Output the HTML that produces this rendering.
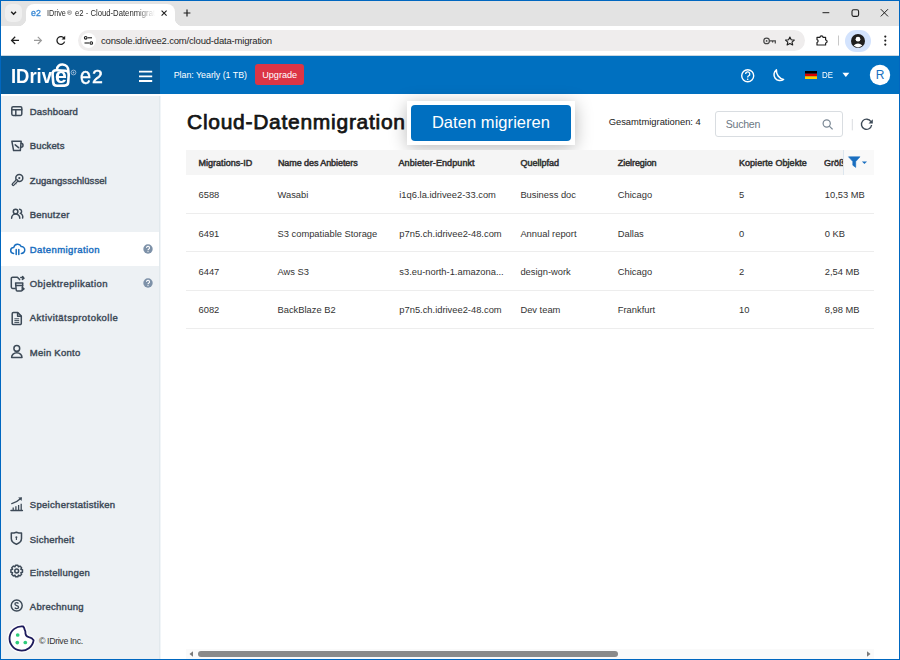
<!DOCTYPE html>
<html><head><meta charset="utf-8">
<style>
*{margin:0;padding:0;box-sizing:border-box}
html,body{width:900px;height:660px;overflow:hidden;background:#fff;font-family:"Liberation Sans",sans-serif}
.abs{position:absolute}
.t{position:absolute;white-space:nowrap;line-height:1}
svg{overflow:visible}
</style></head><body>
<div class="abs" style="left:0;top:0;width:900px;height:660px;background:#0067c0"></div>
<div class="abs" style="left:1px;top:1px;width:898px;height:658px;background:#fff"></div>
<div class="abs" style="left:1px;top:1px;width:898px;height:25px;background:#e3e3e3"></div>
<div class="abs" style="left:26px;top:4px;width:149px;height:23px;background:#fff;border-radius:8px 8px 0 0"></div>
<div class="abs" style="left:18px;top:18px;width:8px;height:8px;background:radial-gradient(circle at 0 0,#e3e3e3 8px,#fff 8.5px)"></div>
<div class="abs" style="left:175px;top:18px;width:8px;height:8px;background:radial-gradient(circle at 8px 0,#e3e3e3 8px,#fff 8.5px)"></div>
<div class="abs" style="left:5px;top:4px;width:17px;height:18px;background:#efefef;border-radius:6px"></div>
<svg class="abs" style="left:0;top:0" width="900" height="56" viewBox="0 0 900 56"><path d="M11.2 11.8 L13.6 14.2 L16 11.8" fill="none" stroke="#1f1f1f" stroke-width="1.5"/></svg>
<div class="t" style="left:31.20px;top:8.07px;font-size:9.60px;transform:scaleX(0.9177);transform-origin:0 0;color:#3a8ad6;-webkit-text-stroke:0.35px #3a8ad6;">e2</div>
<div class="abs" style="left:47px;top:6px;width:108px;height:16px;overflow:hidden;-webkit-mask-image:linear-gradient(90deg,#000 82%,transparent)"><div class="t" style="left:0.00px;top:3.32px;font-size:8.60px;transform:scaleX(0.8416);transform-origin:0 0;color:#2a2a2a;">IDrive</div><div class="t" style="left:20.30px;top:4.05px;font-size:6.20px;transform:scaleX(1.0945);transform-origin:0 0;color:#2a2a2a;">®</div><div class="t" style="left:28.10px;top:3.32px;font-size:8.60px;transform:scaleX(0.8966);transform-origin:0 0;color:#2a2a2a;">e2 - Cloud-Datenmigration</div></div>
<svg class="abs" style="left:0;top:0" width="900" height="56" viewBox="0 0 900 56"><path d="M161.6 10.6 L166.6 15.6 M166.6 10.6 L161.6 15.6" stroke="#1f1f1f" stroke-width="1.1"/><path d="M187 9.6 V16.4 M183.6 13 H190.4" stroke="#1f1f1f" stroke-width="1.2"/><path d="M822.5 12.7 H829.3" stroke="#1f1f1f" stroke-width="1"/><rect x="852" y="9.8" width="6.6" height="6.6" rx="1.6" fill="none" stroke="#1f1f1f" stroke-width="1.1"/><path d="M880.8 9.2 L888 16.4 M888 9.2 L880.8 16.4" stroke="#1f1f1f" stroke-width="1"/></svg>
<div class="abs" style="left:1px;top:55px;width:898px;height:1px;background:#c9d7e1"></div>
<div class="abs" style="left:77.5px;top:29.6px;width:727.5px;height:21.2px;background:#efeded;border-radius:11px"></div>
<div class="abs" style="left:81px;top:33px;width:15px;height:15px;background:#fff;border-radius:50%"></div>
<div class="t" style="left:101.00px;top:35.96px;font-size:9.50px;letter-spacing:-0.183px;color:#262626;">console.idrivee2.com/cloud-data-migration</div>
<svg class="abs" style="left:0;top:0" width="900" height="56" viewBox="0 0 900 56"><path d="M19 40.4 H11.6 M15.2 36.8 L11.6 40.4 L15.2 44" fill="none" stroke="#1f1f1f" stroke-width="1.3"/><path d="M34 40.4 H41.4 M37.8 36.8 L41.4 40.4 L37.8 44" fill="none" stroke="#9a9a9a" stroke-width="1.2"/><path d="M64.3 38.6 A3.9 3.9 0 1 0 64.6 41.6" fill="none" stroke="#1f1f1f" stroke-width="1.3"/><path d="M65.2 35.8 V39.4 H61.6 Z" fill="#1f1f1f"/><circle cx="85.7" cy="37.8" r="1.3" fill="none" stroke="#1f1f1f" stroke-width="1.1"/><path d="M87.6 37.8 H92" stroke="#1f1f1f" stroke-width="1.1"/><circle cx="91.3" cy="43" r="1.3" fill="none" stroke="#1f1f1f" stroke-width="1.1"/><path d="M84.5 43 H89.3" stroke="#1f1f1f" stroke-width="1.1"/><circle cx="766.6" cy="40.9" r="2.8" fill="none" stroke="#474747" stroke-width="1.2"/><circle cx="766.6" cy="40.9" r="0.9" fill="#474747"/><path d="M769.4 40.9 H775.3 V43.6 M772.6 40.9 V42.6" fill="none" stroke="#474747" stroke-width="1.2"/><path d="M789.9 37 L791.2 39.8 L794.3 40.1 L792 42.1 L792.7 45 L789.9 43.5 L787.1 45 L787.8 42.1 L785.5 40.1 L788.6 39.8 Z" fill="none" stroke="#1f1f1f" stroke-width="1.1" stroke-linejoin="round"/><path d="M817 37.3 H820 A1.5 1.5 0 0 1 823 37.3 H825.6 V40 A1.5 1.5 0 0 1 825.6 43 V45 H817 V42.5 A1.5 1.5 0 0 0 817 39.6 Z" fill="none" stroke="#1f1f1f" stroke-width="1.2" stroke-linejoin="round"/><path d="M838.5 35.5 V45.5" stroke="#c8c8c8" stroke-width="1"/><circle cx="885.3" cy="36.6" r="1.1" fill="#1f1f1f"/><circle cx="885.3" cy="40.6" r="1.1" fill="#1f1f1f"/><circle cx="885.3" cy="44.6" r="1.1" fill="#1f1f1f"/></svg>
<div class="abs" style="left:845px;top:29.5px;width:26px;height:22px;background:#d3e3fd;border-radius:11px"></div>
<svg class="abs" style="left:850px;top:33px" width="16" height="16" viewBox="0 0 16 16"><circle cx="8" cy="8" r="7" fill="#1f1f1f"/><circle cx="8" cy="6.2" r="2.4" fill="#fff"/><path d="M3.6 12.6 Q8 8.6 12.4 12.6 A7 7 0 0 1 3.6 12.6 Z" fill="#fff"/></svg>
<div class="abs" style="left:1px;top:56px;width:898px;height:38px;background:#0070c0"></div>
<div class="abs" style="left:1px;top:56px;width:159px;height:38px;background:#065a98"></div>
<div class="t" style="left:11.00px;top:66.84px;font-size:19.80px;font-weight:bold;transform:scaleX(0.9314);transform-origin:0 0;color:#fff;">IDriv</div>
<svg class="abs" style="left:48px;top:60px" width="60" height="30" viewBox="48 60 60 30"><path d="M57 69.6 C56.6 62.6 68.8 62.2 68.5 71.6" fill="none" stroke="#fff" stroke-width="2.6"/><path d="M56.6 70.2 L65.6 70.8 Q69 71.1 68.7 75 L68.2 82.4 Q67.9 85.6 64.6 85.6 L57 85.8 Q53.5 85.8 53.2 82.4 L52.6 74.6 Q52.4 70 56.6 70.2 Z" fill="#065a98" stroke="#fff" stroke-width="2.6" stroke-linejoin="round"/><circle cx="73.5" cy="72.5" r="2.4" fill="none" stroke="#9fbbd8" stroke-width="0.9"/><circle cx="73.5" cy="72.5" r="0.9" fill="#9fbbd8"/></svg>
<div class="t" style="left:54.70px;top:65.18px;font-size:22.00px;font-weight:bold;transform:scaleX(0.9644);transform-origin:0 0;color:#fff;">e</div>
<div class="t" style="left:79.90px;top:63.88px;font-size:24.00px;transform:scaleX(0.8241);transform-origin:0 0;color:#fff;-webkit-text-stroke:0.5px #fff;">e</div>
<div class="t" style="left:92.40px;top:69.10px;font-size:17.60px;transform:scaleX(1.1033);transform-origin:0 0;color:#fff;-webkit-text-stroke:0.5px #fff;">2</div>
<svg class="abs" style="left:136.5px;top:69px" width="18" height="16" viewBox="0 0 18 16"><path d="M2 2.6 H15.2 M2 7.3 H15.2 M2 12 H15.2" stroke="#fff" stroke-width="1.8"/></svg>
<div class="t" style="left:173.70px;top:70.87px;font-size:8.90px;letter-spacing:-0.030px;-webkit-text-stroke:0.00px #fff;color:#fff;">Plan: Yearly (1 TB)</div>
<div class="abs" style="left:255px;top:64.2px;width:49.2px;height:20.8px;background:#dc3545;border-radius:3px"></div>
<div class="t" style="left:262.20px;top:70.90px;font-size:9.10px;letter-spacing:0.015px;-webkit-text-stroke:0.00px #fff;color:#fff;">Upgrade</div>
<svg class="abs" style="left:730px;top:60px" width="170" height="32" viewBox="730 60 170 32"><circle cx="747.7" cy="75.7" r="6" fill="none" stroke="#fff" stroke-width="1.4"/><path d="M745.6 74 A2.1 2.1 0 1 1 748.4 76 Q747.7 76.4 747.7 77.4" fill="none" stroke="#fff" stroke-width="1.3"/><circle cx="747.7" cy="79.3" r="0.8" fill="#fff"/><path d="M776.4 69.8 A6 6 0 1 0 783.6 79.4 A9 9 0 0 1 776.4 69.8 Z" fill="none" stroke="#fff" stroke-width="1.5" stroke-linejoin="round"/><rect x="805" y="71" width="12" height="2.7" fill="#000"/><rect x="805" y="73.7" width="12" height="2.6" fill="#dd0000"/><rect x="805" y="76.3" width="12" height="2.7" fill="#ffce00"/><path d="M842.4 72.8 H849.3 L845.85 76.9 Z" fill="#fff"/><circle cx="880" cy="75" r="10.2" fill="#fff"/></svg>
<div class="t" style="left:821.90px;top:70.20px;font-size:9.80px;transform:scaleX(0.8080);transform-origin:0 0;color:#fff;">DE</div>
<div class="t" style="left:875.80px;top:69.14px;font-size:12.00px;color:#1a6fc0;">R</div>
<div class="abs" style="left:1px;top:94px;width:159px;height:2px;background:#fff"></div>
<div class="abs" style="left:1px;top:96px;width:158px;height:563px;background:#edf1f4"></div>
<div class="abs" style="left:160px;top:96px;width:1px;height:563px;background:#f1f5f8"></div>
<div class="abs" style="left:159px;top:96px;width:1px;height:563px;background:#e2e9ed"></div>
<div class="abs" style="left:1px;top:232px;width:158px;height:34px;background:#fff"></div>
<div class="t" style="left:29.80px;top:106.76px;font-size:9.50px;letter-spacing:0.188px;-webkit-text-stroke:0.42px #3d4a57;color:#3d4a57;">Dashboard</div>
<div class="t" style="left:29.80px;top:141.16px;font-size:9.50px;letter-spacing:0.131px;-webkit-text-stroke:0.42px #3d4a57;color:#3d4a57;">Buckets</div>
<div class="t" style="left:29.80px;top:175.56px;font-size:9.50px;letter-spacing:0.056px;-webkit-text-stroke:0.42px #3d4a57;color:#3d4a57;">Zugangsschlüssel</div>
<div class="t" style="left:29.80px;top:209.96px;font-size:9.50px;letter-spacing:0.222px;-webkit-text-stroke:0.42px #3d4a57;color:#3d4a57;">Benutzer</div>
<div class="t" style="left:29.80px;top:244.56px;font-size:9.50px;letter-spacing:0.404px;-webkit-text-stroke:0.42px #1a6fc0;color:#1a6fc0;">Datenmigration</div>
<div class="t" style="left:29.80px;top:278.96px;font-size:9.50px;letter-spacing:0.432px;-webkit-text-stroke:0.42px #3d4a57;color:#3d4a57;">Objektreplikation</div>
<div class="t" style="left:29.80px;top:313.36px;font-size:9.50px;letter-spacing:0.462px;-webkit-text-stroke:0.42px #3d4a57;color:#3d4a57;">Aktivitätsprotokolle</div>
<div class="t" style="left:29.80px;top:347.96px;font-size:9.50px;letter-spacing:0.269px;-webkit-text-stroke:0.42px #3d4a57;color:#3d4a57;">Mein Konto</div>
<div class="t" style="left:29.80px;top:500.46px;font-size:9.50px;letter-spacing:0.308px;-webkit-text-stroke:0.42px #3d4a57;color:#3d4a57;">Speicherstatistiken</div>
<div class="t" style="left:29.80px;top:534.56px;font-size:9.50px;letter-spacing:0.226px;-webkit-text-stroke:0.42px #3d4a57;color:#3d4a57;">Sicherheit</div>
<div class="t" style="left:29.80px;top:568.26px;font-size:9.50px;letter-spacing:0.253px;-webkit-text-stroke:0.42px #3d4a57;color:#3d4a57;">Einstellungen</div>
<div class="t" style="left:29.80px;top:602.26px;font-size:9.50px;letter-spacing:0.283px;-webkit-text-stroke:0.42px #3d4a57;color:#3d4a57;">Abrechnung</div>
<svg class="abs" style="left:142px;top:243.0px" width="12" height="12" viewBox="0 0 12 12"><circle cx="6" cy="6" r="4.7" fill="#7d91a8"/><path d="M4.5 4.9 A1.5 1.5 0 1 1 6.6 6.2 Q6 6.5 6 7.2" fill="none" stroke="#fff" stroke-width="1.1"/><circle cx="6" cy="8.6" r="0.6" fill="#fff"/></svg>
<svg class="abs" style="left:142px;top:277.4px" width="12" height="12" viewBox="0 0 12 12"><circle cx="6" cy="6" r="4.7" fill="#7d91a8"/><path d="M4.5 4.9 A1.5 1.5 0 1 1 6.6 6.2 Q6 6.5 6 7.2" fill="none" stroke="#fff" stroke-width="1.1"/><circle cx="6" cy="8.6" r="0.6" fill="#fff"/></svg>
<svg class="abs" style="left:0;top:90px" width="40" height="570" viewBox="0 90 40 570"><rect x="11.8" y="106.8" width="10" height="8.6" rx="1.3" fill="none" stroke="#3d4a57" stroke-width="1.5" stroke-linejoin="round" stroke-linecap="round"/><path d="M11.8 109.8 H21.8 M15.8 109.8 V115.4" fill="none" stroke="#3d4a57" stroke-width="1.5" stroke-linejoin="round" stroke-linecap="round"/><path d="M11.9 141.3 H21.2 L20.3 150.6 H13.6 Z" fill="none" stroke="#3d4a57" stroke-width="1.5" stroke-linejoin="round" stroke-linecap="round"/><path d="M21 143.2 A2 2 0 0 1 21 147.2" fill="none" stroke="#3d4a57" stroke-width="1.5" stroke-linejoin="round" stroke-linecap="round"/><path d="M15.2 144.8 L18.6 147.6" fill="none" stroke="#3d4a57" stroke-width="1.5" stroke-linejoin="round" stroke-linecap="round"/><circle cx="19.3" cy="178.1" r="3.5" fill="none" stroke="#3d4a57" stroke-width="1.5" stroke-linejoin="round" stroke-linecap="round"/><circle cx="19.3" cy="178.1" r="1.1" fill="#3d4a57"/><path d="M16.9 180.7 L13.2 184.4" fill="none" stroke="#3d4a57" stroke-width="3.3" stroke-linecap="round"/><path d="M16.6 181 L13.3 184.3" fill="none" stroke="#fff" stroke-width="1" stroke-linecap="round"/><path d="M14.6 183.6 L16.2 182.8 L16.4 184.6 Z" fill="#3d4a57"/><circle cx="15.6" cy="211.5" r="2.3" fill="none" stroke="#3d4a57" stroke-width="1.5" stroke-linejoin="round" stroke-linecap="round"/><path d="M11.6 218.2 A4.1 4.1 0 0 1 19.8 218.2" fill="none" stroke="#3d4a57" stroke-width="1.5" stroke-linejoin="round" stroke-linecap="round"/><path d="M19.6 209.2 A2.2 2.2 0 0 1 20.3 213.4 A3.6 3.6 0 0 1 22.6 218" fill="none" stroke="#3d4a57" stroke-width="1.5" stroke-linejoin="round" stroke-linecap="round"/></svg>
<svg class="abs" style="left:0;top:90px" width="40" height="570" viewBox="0 90 40 570"><path d="M13.6 253.4 A3 3 0 0 1 13.8 247.4 A4 4 0 0 1 21.3 246.6 A3.1 3.1 0 0 1 21.4 253.4" fill="none" stroke="#1a6fc0" stroke-width="1.5" stroke-linejoin="round" stroke-linecap="round"/><path d="M16.2 249.4 V254.4 M18.8 249.4 V254.4" fill="none" stroke="#1a6fc0" stroke-width="1.5" stroke-linejoin="round" stroke-linecap="round"/></svg>
<svg class="abs" style="left:0;top:90px" width="40" height="570" viewBox="0 90 40 570"><path d="M15.2 288.4 H12.6 A1.3 1.3 0 0 1 11.3 287.1 V278.5 A1.3 1.3 0 0 1 12.6 277.2 H17.4 L19.6 279.6" fill="none" stroke="#3d4a57" stroke-width="1.5" stroke-linejoin="round" stroke-linecap="round"/><path d="M15.6 283 H22.8 L22.2 290 A1 1 0 0 1 21.2 290.9 H17.2 A1 1 0 0 1 16.2 290 Z" fill="none" stroke="#3d4a57" stroke-width="1.5" stroke-linejoin="round" stroke-linecap="round"/><path d="M15.8 285.4 H22.6" fill="none" stroke="#3d4a57" stroke-width="1.5" stroke-linejoin="round" stroke-linecap="round"/><path d="M20.8 277.6 H23.4 M22.6 276.6 L24 278.2 L22.4 279.4" fill="none" stroke="#3d4a57" stroke-width="1.5" stroke-linejoin="round" stroke-linecap="round"/><path d="M22.4 287.6 L24 288.9 L22.4 290.2" fill="none" stroke="#3d4a57" stroke-width="1.5" stroke-linejoin="round" stroke-linecap="round"/><path d="M12.2 313.8 A1.2 1.2 0 0 1 13.4 312.6 H17.8 L21.3 316.1 V323.4 A1.2 1.2 0 0 1 20.1 324.6 H13.4 A1.2 1.2 0 0 1 12.2 323.4 Z" fill="none" stroke="#3d4a57" stroke-width="1.5" stroke-linejoin="round" stroke-linecap="round"/><path d="M14.4 318.8 H19.2 M14.4 320.6 H19.2 M14.4 322.4 H19.2" stroke="#3d4a57" stroke-width="1"/><path d="M17.6 312.8 V316.2 H21" fill="none" stroke="#3d4a57" stroke-width="1.5" stroke-linejoin="round" stroke-linecap="round"/><circle cx="16.8" cy="348.4" r="2.9" fill="none" stroke="#3d4a57" stroke-width="1.5" stroke-linejoin="round" stroke-linecap="round"/><path d="M11.6 357.4 A5.2 4.6 0 0 1 22 357.4 Z" fill="none" stroke="#3d4a57" stroke-width="1.5" stroke-linejoin="round" stroke-linecap="round"/></svg>
<svg class="abs" style="left:0;top:490px" width="40" height="170" viewBox="0 490 40 170"><path d="M11 510.5 H22.4" fill="none" stroke="#3d4a57" stroke-width="1.5" stroke-linejoin="round" stroke-linecap="round"/><path d="M13.2 510 V507.4 M15.9 510 V506.2 M18.6 510 V505 M21.2 510 V503.8" fill="none" stroke="#3d4a57" stroke-width="1.3"/><path d="M11.8 503.6 Q16.4 502.6 20.4 498.8" fill="none" stroke="#3d4a57" stroke-width="1.4" stroke-linecap="round"/><path d="M18.2 497.6 L22 497.2 L21.6 501 Z" fill="#3d4a57"/><path d="M16.4 532.2 Q19 533.2 21.5 533.1 V538.4 Q21.5 542.2 16.4 544.2 Q11.3 542.2 11.3 538.4 V533.1 Q13.8 533.2 16.4 532.2 Z" fill="none" stroke="#3d4a57" stroke-width="1.5" stroke-linejoin="round" stroke-linecap="round"/><circle cx="16.4" cy="537.3" r="1" fill="#3d4a57"/><path d="M16.4 537.6 V540" stroke="#3d4a57" stroke-width="1.1"/><circle cx="16.7" cy="571" r="1.9" fill="none" stroke="#3d4a57" stroke-width="1.5" stroke-linejoin="round" stroke-linecap="round"/><path d="M20.86 569.29 L22.48 569.83 L22.48 572.17 L20.86 572.71 L20.85 572.73 L21.62 574.26 L19.96 575.92 L18.43 575.15 L18.41 575.16 L17.87 576.78 L15.53 576.78 L14.99 575.16 L14.97 575.15 L13.44 575.92 L11.78 574.26 L12.55 572.73 L12.54 572.71 L10.92 572.17 L10.92 569.83 L12.54 569.29 L12.55 569.27 L11.78 567.74 L13.44 566.08 L14.97 566.85 L14.99 566.84 L15.53 565.22 L17.87 565.22 L18.41 566.84 L18.43 566.85 L19.96 566.08 L21.62 567.74 L20.85 569.27 Z" fill="none" stroke="#3d4a57" stroke-width="1.5" stroke-linejoin="round" stroke-linecap="round"/><circle cx="16.7" cy="605.6" r="5.5" fill="none" stroke="#3d4a57" stroke-width="1.5" stroke-linejoin="round" stroke-linecap="round"/><path d="M18.4 603.6 Q17.9 602.7 16.7 602.7 Q14.9 602.7 14.9 604.1 Q14.9 605.2 16.7 605.6 Q18.6 606 18.6 607.3 Q18.6 608.6 16.7 608.6 Q15.4 608.6 14.8 607.7" fill="none" stroke="#3d4a57" stroke-width="1.3"/></svg>
<svg class="abs" style="left:0;top:618px" width="40" height="40" viewBox="0 618 40 40"><path d="M23.2 626.5 A12.1 12.1 0 1 0 33.6 640.3 C32.4 638.2 30.6 637.6 28.9 637.2 C26.6 636.6 25.2 634.6 25.4 632 C25.5 630.6 24.6 630 24.4 628.8 C24.2 627.8 23.8 627 23.2 626.5 Z" fill="#fff" stroke="#fff" stroke-width="4.6" stroke-linejoin="round" opacity="0.85"/><path d="M23.2 626.5 A12.1 12.1 0 1 0 33.6 640.3 C32.4 638.2 30.6 637.6 28.9 637.2 C26.6 636.6 25.2 634.6 25.4 632 C25.5 630.6 24.6 630 24.4 628.8 C24.2 627.8 23.8 627 23.2 626.5 Z" fill="#fff" stroke="#1d1b5c" stroke-width="1.8" stroke-linejoin="round"/><circle cx="17.7" cy="635" r="1.85" fill="#2ecc7a"/><circle cx="17.3" cy="642.6" r="1.85" fill="#2ecc7a"/><circle cx="25.3" cy="642.5" r="1.85" fill="#2ecc7a"/></svg>
<div class="t" style="left:38.90px;top:636.65px;font-size:8.80px;letter-spacing:-0.357px;color:#333;">© IDrive Inc.</div>
<div class="t" style="left:187.00px;top:110.82px;font-size:21.00px;letter-spacing:0.725px;-webkit-text-stroke:0.75px #151515;color:#151515;">Cloud-Datenmigration</div>
<div class="abs" style="left:407px;top:101px;width:168px;height:44px;background:#fff;box-shadow:0 3px 18px rgba(0,0,0,0.28)"></div>
<div class="abs" style="left:411px;top:105px;width:160px;height:36px;background:#006fc0;border-radius:4px"></div>
<div class="t" style="left:431.90px;top:113.93px;font-size:16.50px;letter-spacing:0.054px;color:#fff;">Daten migrieren</div>
<div class="t" style="left:608.70px;top:117.34px;font-size:9.40px;letter-spacing:-0.009px;color:#222;">Gesamtmigrationen: 4</div>
<div class="abs" style="left:715.3px;top:110.7px;width:127.4px;height:26.8px;border:1px solid #d9dde1;border-radius:3px;background:#fff"></div>
<div class="t" style="left:725.70px;top:118.73px;font-size:10.60px;letter-spacing:-0.259px;color:#6c7884;">Suchen</div>
<svg class="abs" style="left:700px;top:100px" width="200" height="45" viewBox="700 100 200 45"><circle cx="826.7" cy="123.5" r="3.6" fill="none" stroke="#7a8794" stroke-width="1.2"/><path d="M829.3 126.1 L832.6 129.4" stroke="#7a8794" stroke-width="1.3"/><path d="M852.3 119 V130.4" stroke="#dadde0" stroke-width="1"/><path d="M870.9 121.6 A5.1 5.1 0 1 0 871.6 125" fill="none" stroke="#3d4a57" stroke-width="1.4"/><path d="M872.8 119.2 V123.5 H868.5 Z" fill="#3d4a57"/></svg>
<div class="abs" style="left:186px;top:150px;width:688px;height:25px;background:#f5f5f5"></div>
<div class="abs" style="left:842.5px;top:150px;width:31.5px;height:25px;background:#f9f9f9;border-left:1px solid #dde6ee"></div>
<div class="t" style="left:198.50px;top:159.28px;font-size:9.00px;letter-spacing:0.024px;-webkit-text-stroke:0.50px #333;color:#333;">Migrations-ID</div>
<div class="t" style="left:277.90px;top:159.28px;font-size:9.00px;letter-spacing:-0.073px;-webkit-text-stroke:0.50px #333;color:#333;">Name des Anbieters</div>
<div class="t" style="left:398.50px;top:159.28px;font-size:9.00px;letter-spacing:0.097px;-webkit-text-stroke:0.50px #333;color:#333;">Anbieter-Endpunkt</div>
<div class="t" style="left:520.40px;top:159.28px;font-size:9.00px;letter-spacing:0.009px;-webkit-text-stroke:0.50px #333;color:#333;">Quellpfad</div>
<div class="t" style="left:617.80px;top:159.28px;font-size:9.00px;letter-spacing:-0.080px;-webkit-text-stroke:0.50px #333;color:#333;">Zielregion</div>
<div class="t" style="left:738.90px;top:159.28px;font-size:9.00px;letter-spacing:0.057px;-webkit-text-stroke:0.50px #333;color:#333;">Kopierte Objekte</div>
<div class="abs" style="left:824px;top:155px;width:18.5px;height:16px;overflow:hidden"><div class="t" style="left:0.00px;top:4.28px;font-size:9.00px;-webkit-text-stroke:0.50px #333;color:#333;">Größe</div></div>
<svg class="abs" style="left:844px;top:152px" width="30" height="20" viewBox="844 152 30 20"><path d="M848.5 156.8 H860 L855.7 161.6 V167.4 L852.8 165.2 V161.6 Z" fill="#1a6fc0" stroke="#1a6fc0" stroke-width="0.6" stroke-linejoin="round"/><path d="M861.9 161.4 H867 L864.45 164 Z" fill="#1a6fc0"/></svg>
<div class="t" style="left:198.50px;top:191.19px;font-size:9.35px;color:#333;">6588</div>
<div class="t" style="left:277.50px;top:191.19px;font-size:9.35px;color:#333;">Wasabi</div>
<div class="t" style="left:399.30px;top:191.19px;font-size:9.35px;color:#333;">i1q6.la.idrivee2-33.com</div>
<div class="t" style="left:520.40px;top:191.19px;font-size:9.35px;color:#333;">Business doc</div>
<div class="t" style="left:617.80px;top:191.19px;font-size:9.35px;color:#333;">Chicago</div>
<div class="t" style="left:739.00px;top:191.19px;font-size:9.35px;color:#333;">5</div>
<div class="t" style="left:824.80px;top:191.19px;font-size:9.35px;color:#333;">10,53 MB</div>
<div class="abs" style="left:186px;top:213.0px;width:688px;height:1px;background:#ededed"></div>
<div class="t" style="left:198.50px;top:229.59px;font-size:9.35px;color:#333;">6491</div>
<div class="t" style="left:277.50px;top:229.59px;font-size:9.35px;color:#333;">S3 compatiable Storage</div>
<div class="t" style="left:399.30px;top:229.59px;font-size:9.35px;color:#333;">p7n5.ch.idrivee2-48.com</div>
<div class="t" style="left:520.40px;top:229.59px;font-size:9.35px;color:#333;">Annual report</div>
<div class="t" style="left:617.80px;top:229.59px;font-size:9.35px;color:#333;">Dallas</div>
<div class="t" style="left:739.00px;top:229.59px;font-size:9.35px;color:#333;">0</div>
<div class="t" style="left:824.80px;top:229.59px;font-size:9.35px;color:#333;">0 KB</div>
<div class="abs" style="left:186px;top:251.4px;width:688px;height:1px;background:#ededed"></div>
<div class="t" style="left:198.50px;top:267.99px;font-size:9.35px;color:#333;">6447</div>
<div class="t" style="left:277.50px;top:267.99px;font-size:9.35px;color:#333;">Aws S3</div>
<div class="t" style="left:399.30px;top:267.99px;font-size:9.35px;color:#333;">s3.eu-north-1.amazona...</div>
<div class="t" style="left:520.40px;top:267.99px;font-size:9.35px;color:#333;">design-work</div>
<div class="t" style="left:617.80px;top:267.99px;font-size:9.35px;color:#333;">Chicago</div>
<div class="t" style="left:739.00px;top:267.99px;font-size:9.35px;color:#333;">2</div>
<div class="t" style="left:824.80px;top:267.99px;font-size:9.35px;color:#333;">2,54 MB</div>
<div class="abs" style="left:186px;top:289.8px;width:688px;height:1px;background:#ededed"></div>
<div class="t" style="left:198.50px;top:306.39px;font-size:9.35px;color:#333;">6082</div>
<div class="t" style="left:277.50px;top:306.39px;font-size:9.35px;color:#333;">BackBlaze B2</div>
<div class="t" style="left:399.30px;top:306.39px;font-size:9.35px;color:#333;">p7n5.ch.idrivee2-48.com</div>
<div class="t" style="left:520.40px;top:306.39px;font-size:9.35px;color:#333;">Dev team</div>
<div class="t" style="left:617.80px;top:306.39px;font-size:9.35px;color:#333;">Frankfurt</div>
<div class="t" style="left:739.00px;top:306.39px;font-size:9.35px;color:#333;">10</div>
<div class="t" style="left:824.80px;top:306.39px;font-size:9.35px;color:#333;">8,98 MB</div>
<div class="abs" style="left:186px;top:328.2px;width:688px;height:1px;background:#ededed"></div>
<div class="abs" style="left:186px;top:649px;width:688px;height:10px;background:#fafafa"></div>
<div class="abs" style="left:198px;top:651px;width:420px;height:6px;background:#8a8a8a;border-radius:3px"></div>
<svg class="abs" style="left:186px;top:649px" width="690" height="10" viewBox="186 649 690 10"><path d="M189.5 654 L193 651.2 V656.8 Z" fill="#7a7a7a"/><path d="M870.5 654 L867 651.2 V656.8 Z" fill="#7a7a7a"/></svg>
</body></html>
